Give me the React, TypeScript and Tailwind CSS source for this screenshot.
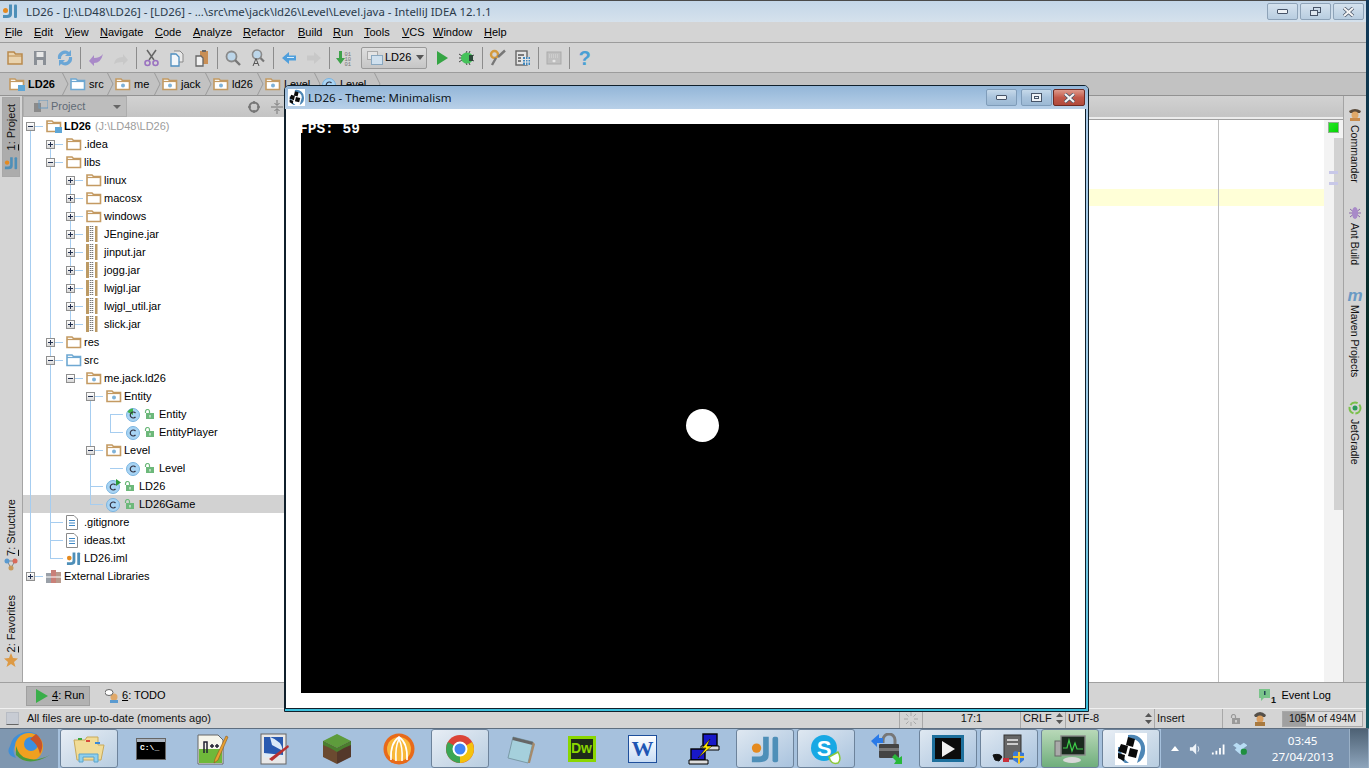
import type { ReactNode } from 'react';

const FONT = "font-['Liberation_Sans',Arial,sans-serif]";

// ---- small icons ----
function Folder({ tone = '#c49a62', dot, corner }: { tone?: string; dot?: boolean; corner?: boolean }) {
  return (
    <svg width="16" height="14" viewBox="0 0 16 14" className="shrink-0">
      <path d="M1 12.500V2h5l1.500 1.500H14.500V12.500Z" fill="#fff" stroke={tone} strokeWidth="1.600" />
      <path d="M1 4.500H14.500" stroke={tone} strokeWidth="1.200" />
      {dot && <circle cx="8" cy="8.500" r="2" fill="#7fb2d8" />}
      {corner && <rect x="9" y="8" width="7" height="6" fill="#5ea6d6" />}
    </svg>
  );
}

function Jar() {
  return (
    <svg width="12" height="16" viewBox="0 0 12 16">
      <rect x="0" y="0" width="3" height="16" fill="#bc9a64" />
      <rect x="9" y="0" width="2.500" height="16" fill="#bc9a64" />
      <path d="M4.500 0V16M6.500 0V16" stroke="#777" strokeWidth="1.500" strokeDasharray="1 1" />
    </svg>
  );
}

function ClassIcon({ arc, run }: { arc?: boolean; run?: boolean }) {
  return (
    <svg width="15" height="15" viewBox="0 0 15 15">
      <circle cx="7" cy="8" r="6.500" fill="#a8d4f4" stroke="#7ab4e0" />
      {arc && <path d="M7 8V1.500A6.500 6.500 0 0 0 1.500 5Z" fill="#3fb24a" />}
      <path d="M9.500 6A3 3 0 1 0 9.500 10" fill="none" stroke="#334" strokeWidth="1.200" />
      {run && <path d="M10 0L15 3.500L10 7Z" fill="#2a9a3a" />}
    </svg>
  );
}

function OpenLock({ tone = '#6cb87a' }: { tone?: string }) {
  return (
    <svg width="10" height="10" viewBox="0 0 10 10">
      <path d="M1.500 4V2.500a2 2 0 0 1 4 0V4" fill="none" stroke={tone} strokeWidth="1.200" />
      <rect x="2" y="4" width="8" height="6" fill={tone} />
      <rect x="5.500" y="6" width="1" height="2.500" fill="#fff" />
    </svg>
  );
}

function TextFile({ iml }: { iml?: boolean }) {
  if (iml) return <JiMark size={15} />;
  return (
    <svg width="12" height="15" viewBox="0 0 12 15">
      <path d="M.5.500H8L11.500 4V14.500H.5Z" fill="#fff" stroke="#8a8a8a" />
      <path d="M3 5.500H9M3 8H9M3 10.500H9" stroke="#3f87c4" />
    </svg>
  );
}

function JiMark({ size }: { size: number }) {
  return (
    <svg width={size} height={size} viewBox="0 0 16 16">
      <path d="M7 1.500H10V11Q10 15 5 15H1V12H5Q7 12 7 10Z" fill="#4e8fb8" />
      <rect x="12" y="1.500" width="3" height="13.500" rx="1" fill="#4e8fb8" />
      <circle cx="3.500" cy="7.500" r="2.500" fill="#e58a1f" />
    </svg>
  );
}

function GameLogo({ size }: { size: number }) {
  return (
    <svg width={size} height={size} viewBox="0 0 32 32">
      <rect width="32" height="32" fill="#fff" />
      <path d="M13 2A14 14 0 0 1 30 16A14 14 0 0 1 22 30L26 16Q26 6 13 5Z" fill="#4d86b5" />
      <path d="M3 14Q2 24 10 30L14 30Q5 24 6 14Z" fill="#4d86b5" />
      <path d="M13 4l7 2l-2 8l-7-2ZM6 11l7 2l-2 8l-8-3ZM15 15l8 2l-2 8l-8-2ZM3 20l7 2l-1 6l-6-3Z" fill="#0a0a0a" />
    </svg>
  );
}

function Expander({ open }: { open?: boolean }) {
  return (
    <span className="relative z-10 flex h-[9px] w-[9px] shrink-0 items-center justify-center border border-[#8f8f8f] bg-linear-to-b from-white to-[#d8d8d8]">
      <span className="absolute h-px w-[5px] bg-[#23304f]" />
      {!open && <span className="absolute h-[5px] w-px bg-[#23304f]" />}
    </span>
  );
}

function Vert({ children, flip, className = '' }: { children: ReactNode; flip?: boolean; className?: string }) {
  return (
    <span className={`whitespace-nowrap leading-[18px] text-[#111] [writing-mode:vertical-rl] ${flip ? 'rotate-180 text-[11px]' : 'text-[10.500px]'} ${className}`}>
      {children}
    </span>
  );
}

function Key({ children }: { children: ReactNode }) {
  return <span className="underline underline-offset-1">{children}</span>;
}

// ---- tree ----
type Row = {
  label: string;
  level: number;
  icon: ReactNode;
  exp?: 'open' | 'closed';
  lock?: boolean;
  note?: string;
  bold?: boolean;
  selected?: boolean;
};

const F = <Folder />;
const P = <Folder dot />;
const J = <Jar />;
const C = <ClassIcon />;

const rows: Row[] = [
  { label: 'LD26', level: 0, icon: <Folder corner />, exp: 'open', bold: true, note: '(J:\\LD48\\LD26)' },
  { label: '.idea', level: 1, icon: F, exp: 'closed' },
  { label: 'libs', level: 1, icon: F, exp: 'open' },
  { label: 'linux', level: 2, icon: F, exp: 'closed' },
  { label: 'macosx', level: 2, icon: F, exp: 'closed' },
  { label: 'windows', level: 2, icon: F, exp: 'closed' },
  { label: 'JEngine.jar', level: 2, icon: J, exp: 'closed' },
  { label: 'jinput.jar', level: 2, icon: J, exp: 'closed' },
  { label: 'jogg.jar', level: 2, icon: J, exp: 'closed' },
  { label: 'lwjgl.jar', level: 2, icon: J, exp: 'closed' },
  { label: 'lwjgl_util.jar', level: 2, icon: J, exp: 'closed' },
  { label: 'slick.jar', level: 2, icon: J, exp: 'closed' },
  { label: 'res', level: 1, icon: F, exp: 'closed' },
  { label: 'src', level: 1, icon: <Folder tone="#6ea8d2" />, exp: 'open' },
  { label: 'me.jack.ld26', level: 2, icon: P, exp: 'open' },
  { label: 'Entity', level: 3, icon: P, exp: 'open' },
  { label: 'Entity', level: 4, icon: <ClassIcon arc />, lock: true },
  { label: 'EntityPlayer', level: 4, icon: C, lock: true },
  { label: 'Level', level: 3, icon: P, exp: 'open' },
  { label: 'Level', level: 4, icon: C, lock: true },
  { label: 'LD26', level: 3, icon: <ClassIcon run />, lock: true },
  { label: 'LD26Game', level: 3, icon: C, lock: true, selected: true },
  { label: '.gitignore', level: 1, icon: <TextFile /> },
  { label: 'ideas.txt', level: 1, icon: <TextFile /> },
  { label: 'LD26.iml', level: 1, icon: <TextFile iml /> },
  {
    label: 'External Libraries',
    level: 0,
    exp: 'closed',
    icon: (
      <svg width="16" height="14" viewBox="0 0 16 14">
        <rect x="0" y="4" width="5" height="10" fill="#9aa0a8" />
        <rect x="5" y="1" width="5" height="13" fill="#c98078" />
        <rect x="10" y="3" width="5" height="11" fill="#b89a8c" />
        <path d="M0 8H15" stroke="#fff" />
      </svg>
    ),
  },
];

function TreeGuides() {
  // coordinates are relative to the tree panel
  const y = (i: number) => 9 + i * 18;
  const vs: [number, number, number][] = [
    [7, 0, 25],
    [27, 1, 24],
    [47, 3, 11],
    [47, 14, 14],
    [67, 15, 21],
    [87, 16, 17],
    [87, 19, 19],
  ];
  return (
    <svg className="pointer-events-none absolute left-0 top-0 z-[5]" width="200" height="480">
      {vs.map(([x, a, b]) => (
        <line key={`${x}-${a}`} x1={x + 0.5} x2={x + 0.5} y1={y(a)} y2={y(b) + 0.5} stroke="#a6cdf0" />
      ))}
      {rows.map((r, i) => {
        const x = 7 + r.level * 20;
        return <line key={i} x1={x} x2={x + 13} y1={y(i) + 0.5} y2={y(i) + 0.5} stroke="#a6cdf0" />;
      })}
    </svg>
  );
}

function TreeRow({ row }: { row: Row }) {
  return (
    <div
      className={`flex h-[18px] items-center text-[11px] text-black ${row.selected ? 'bg-[#d2d2d2]' : ''}`}
      style={{ paddingLeft: 3 + row.level * 20 }}
    >
      <span className="flex w-[20px] shrink-0 items-center">
        {row.exp && <Expander open={row.exp === 'open'} />}
      </span>
      <span className="relative z-10 flex w-[18px] shrink-0 items-center">{row.icon}</span>
      {row.lock && (
        <span className="relative z-10 flex w-[15px] shrink-0 items-center">
          <OpenLock />
        </span>
      )}
      <span className={`whitespace-nowrap ${row.bold ? 'font-bold' : ''}`}>{row.label}</span>
      {row.note && <span className="ml-[4px] whitespace-nowrap text-[#9c9c9c]">{row.note}</span>}
    </div>
  );
}

// ---- toolbar ----
function Tool({ children }: { children: ReactNode }) {
  return <span className="flex h-full w-[25px] shrink-0 items-center justify-center">{children}</span>;
}

function Sep() {
  return (
    <span className="flex h-full w-[6px] shrink-0 items-center justify-center">
      <span className="h-[22px] w-px bg-[#8c8c8c]" />
    </span>
  );
}

const Glyph = ({ children }: { children: ReactNode }) => (
  <svg width="18" height="18" viewBox="0 0 18 18">
    {children}
  </svg>
);

function Toolbar() {
  return (
    <div className="flex h-[30px] shrink-0 items-center border-b border-[#9c9c9c] pl-[2px]">
      <Tool>
        <Glyph>
          <path d="M2 15V3h6l1.500 2H16V15Z" fill="#e9d3ae" stroke="#b98a4d" strokeWidth="1.500" />
          <path d="M2 7H16" stroke="#b98a4d" />
        </Glyph>
      </Tool>
      <Tool>
        <Glyph>
          <path d="M3 2H15V16H3Z" fill="#8a8f96" />
          <rect x="5.500" y="3" width="7" height="5" fill="#e8e8e8" />
          <rect x="6" y="11" width="6" height="5" fill="#d8d8d8" />
        </Glyph>
      </Tool>
      <Tool>
        <Glyph>
          <path d="M2 10A7 7 0 0 1 13 3L15 1V7H9L11 5A4.500 4.500 0 0 0 5 10Z" fill="#6aa6d6" />
          <path d="M16 8A7 7 0 0 1 5 15L3 17V11H9L7 13A4.500 4.500 0 0 0 13 8Z" fill="#6aa6d6" />
        </Glyph>
      </Tool>
      <Sep />
      <Tool>
        <Glyph>
          <path d="M2 12L7 17V14Q14 14 16 5Q13 9 7 9V6Z" fill="#a98ac8" />
        </Glyph>
      </Tool>
      <Tool>
        <Glyph>
          <path d="M16 11L11 16V13Q5 13 2 15Q3 8 11 8V5Z" fill="#c8c8c8" />
        </Glyph>
      </Tool>
      <Sep />
      <Tool>
        <Glyph>
          <path d="M4 1L11 11M13 1L6 11" stroke="#666" strokeWidth="1.500" />
          <circle cx="4.500" cy="14" r="2.500" fill="none" stroke="#9a72c0" strokeWidth="1.600" />
          <circle cx="12.500" cy="14" r="2.500" fill="none" stroke="#9a72c0" strokeWidth="1.600" />
        </Glyph>
      </Tool>
      <Tool>
        <Glyph>
          <path d="M6 2H12L15 5V13H11" fill="#e8e8e8" stroke="#888" />
          <path d="M3 5H8L11 8V17H3Z" fill="#f2f6fa" stroke="#4f8fc0" strokeWidth="1.300" />
        </Glyph>
      </Tool>
      <Tool>
        <Glyph>
          <rect x="7" y="2" width="8" height="13" fill="#c98f55" />
          <rect x="9" y="1" width="4" height="2" fill="#666" />
          <path d="M3 7H8L10 9V17H3Z" fill="#f2f2f2" stroke="#666" strokeWidth="1.300" />
        </Glyph>
      </Tool>
      <Sep />
      <Tool>
        <Glyph>
          <circle cx="7.500" cy="7.500" r="5" fill="#bcd6ea" stroke="#8a8a8a" strokeWidth="1.800" />
          <path d="M11 11L16 16" stroke="#777" strokeWidth="2.400" />
        </Glyph>
      </Tool>
      <Tool>
        <Glyph>
          <circle cx="8" cy="5.500" r="4.500" fill="#bcd6ea" stroke="#8a8a8a" strokeWidth="1.600" />
          <path d="M11.500 9L15 12.500" stroke="#777" strokeWidth="2.200" />
          <path d="M4 17L7 9.500L10 17M5 14.500H9" fill="none" stroke="#555" />
        </Glyph>
      </Tool>
      <Sep />
      <Tool>
        <Glyph>
          <path d="M2 9L9 3V6.500H16V11.500H9V15Z" fill="#4f9fdc" />
          <path d="M7 8.500H14" stroke="#d6ecfb" />
        </Glyph>
      </Tool>
      <Tool>
        <Glyph>
          <path d="M16 9L9 3V6.500H2V11.500H9V15Z" fill="#c8c8c8" />
        </Glyph>
      </Tool>
      <Sep />
      <Tool>
        <Glyph>
          <path d="M3 2H6V9H9L4.500 15L0 9H3Z" fill="#3fa24a" />
          <text x="8.500" y="6.500" fontSize="5.500" fill="#777" fontFamily="Liberation Mono">01</text>
          <text x="8.500" y="11.500" fontSize="5.500" fill="#777" fontFamily="Liberation Mono">10</text>
          <text x="8.500" y="16.500" fontSize="5.500" fill="#777" fontFamily="Liberation Mono">01</text>
        </Glyph>
      </Tool>
      <div className="ml-[4px] flex h-[22px] w-[66px] shrink-0 items-center rounded-[2px] border border-[#9a9a9a] bg-linear-to-b from-[#dedede] to-[#c6c6c6] pl-[5px] text-[11px] text-black">
        <svg width="16" height="14" viewBox="0 0 16 14" className="mr-[2px]">
          <rect x=".5" y=".5" width="10" height="8" fill="#e4e4e4" stroke="#aaa" />
          <rect x="4.500" y="4.500" width="11" height="9" fill="#cfe0ee" stroke="#8aa8c0" />
        </svg>
        LD26
        <span className="ml-[5px] h-0 w-0 border-x-[4px] border-t-[5px] border-x-transparent border-t-[#555]" />
      </div>
      <span className="w-[2px] shrink-0" />
      <Tool>
        <Glyph>
          <path d="M4 2L15 9L4 16Z" fill="#35a544" />
        </Glyph>
      </Tool>
      <Tool>
        <Glyph>
          <path d="M1 5L4 7M1 13L4 11M1 9H4M9 2L8 4M12 2L11 4M9 16L8 14M12 16L11 14M16 6L14 7M16 12L14 11" stroke="#444" />
          <ellipse cx="9" cy="9" rx="6" ry="5.500" fill="#45c25a" />
          <rect x="11" y="6" width="4" height="6" fill="#2c4a3a" />
        </Glyph>
      </Tool>
      <Sep />
      <Tool>
        <Glyph>
          <circle cx="5.500" cy="5.500" r="3.500" fill="none" stroke="#d49a3c" strokeWidth="2.400" />
          <path d="M9 8L16 1.500M7 9L3 16" stroke="#777" strokeWidth="2.400" />
        </Glyph>
      </Tool>
      <Tool>
        <Glyph>
          <rect x="2" y="2" width="11" height="14" fill="#e4e4e4" stroke="#666" strokeWidth="1.400" />
          <path d="M4 6H10M4 9H7M4 12H7" stroke="#555" strokeWidth="1.400" />
          <rect x="9" y="8" width="7" height="8" fill="#3e86bd" />
          <path d="M11.500 8V16M14 8V16M9 10.500H16M9 13H16" stroke="#e4e4e4" />
        </Glyph>
      </Tool>
      <Sep />
      <Tool>
        <Glyph>
          <rect x="2" y="3" width="14" height="12" fill="#c0c0c0" stroke="#ababab" />
          <path d="M4 6H14M4 8H14" stroke="#dadada" strokeDasharray="1 1" />
          <path d="M7 12L9 10.500L11 12L9 13.500Z" fill="#e8e8e8" />
        </Glyph>
      </Tool>
      <Sep />
      <Tool>
        <span className="text-[20px] font-bold leading-none text-[#4a9fd4]">?</span>
      </Tool>
    </div>
  );
}

// ---- breadcrumb ----
const crumbs: { label: string; width: string; icon: ReactNode; bold?: boolean }[] = [
  { label: 'LD26', width: 'w-[61px]', icon: <Folder corner />, bold: true },
  { label: 'src', width: 'w-[45px]', icon: <Folder tone="#6ea8d2" /> },
  { label: 'me', width: 'w-[47px]', icon: <Folder dot /> },
  { label: 'jack', width: 'w-[51px]', icon: <Folder dot /> },
  { label: 'ld26', width: 'w-[52px]', icon: <Folder dot /> },
  { label: 'Level', width: 'w-[57px]', icon: <Folder dot /> },
  { label: 'Level', width: 'w-[60px]', icon: <ClassIcon /> },
];

function Breadcrumb() {
  return (
    <div className="flex h-[23px] shrink-0 items-center border-b border-[#929292] bg-[#c2c2c2] pl-[9px] text-[11px] text-black">
      {crumbs.map((c, i) => (
        <div key={i} className={`flex h-full shrink-0 items-center justify-between ${c.width}`}>
          <span className="flex items-center gap-[3px]">
            {c.icon}
            <span className={c.bold ? 'font-bold' : ''}>{c.label}</span>
          </span>
          <svg width="7" height="22" viewBox="0 0 7 22" className="mr-[1px]">
            <path d="M.5 0L6 11L.5 22" fill="none" stroke="#9a9a9a" />
          </svg>
        </div>
      ))}
    </div>
  );
}

// ---- window buttons ----
function GlassButton({ width, tone, children }: { width: string; tone?: 'close' | 'dim'; children: ReactNode }) {
  const look =
    tone === 'close'
      ? 'border-[#6e2a22] bg-linear-to-b from-[#dd9a8c] via-[#c2594a] to-[#b04a3c]'
      : tone === 'dim'
        ? 'border-[#8ea3b8] bg-linear-to-b from-[#d5e2ee] to-[#b8cde0]'
        : 'border-[#7f9cb9] bg-linear-to-b from-[#c6d9ea] via-[#a9c3dc] to-[#9cb9d4]';
  return (
    <span className={`flex h-[17px] shrink-0 items-center justify-center rounded-[2px] border ${look} ${width}`}>
      {children}
    </span>
  );
}

const CloseMark = () => (
  <svg width="13" height="10" viewBox="0 0 13 10">
    <path d="M2 1L11 9M11 1L2 9" stroke="#475468" strokeWidth="3.600" />
    <path d="M2 1L11 9M11 1L2 9" stroke="#f4f4f4" strokeWidth="2.200" />
  </svg>
);

// ---- game window ----
function GameWindow() {
  return (
    <div className="absolute left-[284px] top-[85px] z-20 flex h-[627px] w-[805px] flex-col overflow-hidden rounded-t-[5px] border border-[#10202c] bg-linear-to-b from-[#a8c8e6] via-[#9ccbe6] to-[#3cc0dc]">
      <div className="flex h-[23px] shrink-0 items-center justify-between bg-linear-to-b from-[#93b6d8] to-[#b8d0e8] pl-[3px] pr-[3px]">
        <div className="flex items-center gap-[3px] font-['Noto_Sans',sans-serif] text-[11.500px] text-[#0c1420]">
          <GameLogo size={17} />
          <span>LD26 - Theme: Minimalism</span>
        </div>
        <div className="flex items-center">
          <GlassButton width="w-[31px]">
            <span className="h-[5px] w-[11px] rounded-[1px] border border-[#475468] bg-[#eef2f6]" />
          </GlassButton>
          <span className="w-[4px]" />
          <GlassButton width="w-[31px]">
            <span className="flex h-[9px] w-[11px] items-center justify-center border border-[#475468] bg-[#eef2f6]">
              <span className="h-[3px] w-[5px] border border-[#475468]" />
            </span>
          </GlassButton>
          <span className="w-[1px]" />
          <GlassButton width="w-[32px]" tone="close">
            <CloseMark />
          </GlassButton>
        </div>
      </div>
      <div className="mr-[2px] mb-[2px] min-h-0 flex-1 border-x border-b border-[#10202c] bg-white p-[15px]">
        <div className="relative h-full w-full bg-black">
          <span className="absolute left-[-2px] top-[-3px] whitespace-pre font-['Liberation_Mono',monospace] text-[14.500px] font-bold leading-[16px] text-white">
            FPS: 59
          </span>
          <span className="absolute left-[385px] top-[285px] h-[33px] w-[33px] rounded-full bg-white" />
        </div>
      </div>
    </div>
  );
}

// ---- taskbar ----
function Task({ width, look, children }: { width: string; look?: 'on' | 'green' | 'light'; children: ReactNode }) {
  const skin =
    look === 'on'
      ? 'border border-[#6d839b] bg-linear-to-br from-[#dfe8f1] to-[#a9c3de]'
      : look === 'green'
        ? 'border border-[#6d839b] bg-linear-to-b from-[#b8d8b8] to-[#6fae7c]'
        : look === 'light'
          ? 'border border-[#6d839b] bg-linear-to-br from-[#e8eef5] to-[#b8cde0]'
          : '';
  return (
    <div className={`flex h-full shrink-0 items-center justify-center ${width}`}>
      <div className={`flex h-[39px] w-[58px] items-center justify-center rounded-[3px] ${skin}`}>{children}</div>
    </div>
  );
}

function Taskbar() {
  return (
    <div className="flex h-[40px] w-[1369px] shrink-0 items-center border-t border-[#5e6e80] bg-[#a6c1dd]">
      <div className="flex h-full w-[58px] shrink-0 items-center justify-center bg-[#7f97b0]">
        <svg width="46" height="34" viewBox="0 0 46 34">
          <path d="M4 14A18 18 0 0 1 34 5Q22 1 12 10Q4 17 10 26Q-1 23 4 14Z" fill="#3f8fd8" />
          <circle cx="23" cy="15" r="14" fill="#f0a020" />
          <circle cx="25" cy="12" r="7" fill="#3c8fe0" />
          <path d="M10 23Q22 36 44 23Q30 30 20 26Q13 24 10 14Z" fill="#4a9a3a" />
          <path d="M30 2Q40 10 34 22Q32 12 24 7Z" fill="#c8542a" />
        </svg>
      </div>
      <Task width="w-[62px]" look="light">
        <svg width="32" height="28" viewBox="0 0 32 28">
          <path d="M1 5H12L14 2H25V10H31L28 25H4Z" fill="#f1dc97" stroke="#c8a95a" />
          <rect x="5" y="3" width="4" height="2" fill="#3ea83e" />
          <rect x="13" y="5" width="4" height="2" fill="#d84a3a" />
          <rect x="22" y="7" width="5" height="2" fill="#3a8ad8" />
          <path d="M6 27V19H25V27H21V22H10V27Z" fill="#8fd0ee" stroke="#5aa4cc" />
        </svg>
      </Task>
      <Task width="w-[62px]">
        <div className="flex h-[22px] w-[30px] flex-col border border-[#666] bg-black">
          <span className="h-[3px] bg-[#aab4c0]" />
          <span className="whitespace-pre pl-[3px] font-['Liberation_Mono',monospace] text-[8px] font-bold leading-[11px] text-white">C:\_</span>
        </div>
      </Task>
      <Task width="w-[62px]">
        <svg width="32" height="32" viewBox="0 0 32 32">
          <path d="M1 2H21L26 7V31H1Z" fill="#f6f6ec" stroke="#666" />
          <rect x="2" y="16" width="23" height="14" fill="#6fb83a" />
          <path d="M7 20V9H10V20M13 13H17M15 11V15M18 13H22M20 11V15" fill="none" stroke="#223" strokeWidth="1.500" />
          <path d="M18 26L29 3L31 4L21 27L17 30Z" fill="#e8a030" stroke="#8a5a20" strokeWidth=".6" />
        </svg>
      </Task>
      <Task width="w-[62px]">
        <svg width="30" height="32" viewBox="0 0 30 32">
          <rect x="1" y="1" width="25" height="30" fill="#e8e8e8" stroke="#666" />
          <rect x="4" y="4" width="19" height="20" fill="#2a5ab0" />
          <path d="M10 4Q22 8 23 18L12 12ZM4 20L23 22V24H4Z" fill="#dceaf8" />
          <path d="M9 26L28 12L29 14L12 28Z" fill="#b83030" />
        </svg>
      </Task>
      <Task width="w-[62px]">
        <svg width="30" height="32" viewBox="0 0 30 32">
          <path d="M15 1L29 8L15 15L1 8Z" fill="#5e9c3c" />
          <path d="M1 8L15 15V31L1 24Z" fill="#6b4a30" />
          <path d="M29 8L15 15V31L29 24Z" fill="#54382a" />
          <path d="M1 8L15 15L29 8V12L22 15L15 19L8 15L1 12Z" fill="#4a7f2e" />
        </svg>
      </Task>
      <Task width="w-[62px]">
        <svg width="32" height="32" viewBox="0 0 32 32">
          <circle cx="16" cy="16" r="15.500" fill="#e86a1a" />
          <circle cx="16" cy="16" r="12" fill="#f8b83a" />
          <path d="M8 27Q7 10 16 4Q25 10 24 27M13 28Q12 14 16 6Q20 14 19 28" fill="none" stroke="#fff" strokeWidth="1.600" />
        </svg>
      </Task>
      <Task width="w-[60px]" look="light">
        <svg width="30" height="30" viewBox="0 0 30 30">
          <circle cx="15" cy="15" r="14" fill="#db4437" />
          <path d="M15 15L27.100 8A14 14 0 0 1 15 29Z" fill="#f4c20d" />
          <path d="M15 15L15 29A14 14 0 0 1 2.900 8Z" fill="#3aa655" />
          <circle cx="15" cy="15" r="6.500" fill="#4285f4" stroke="#fff" strokeWidth="2" />
        </svg>
      </Task>
      <Task width="w-[61px]">
        <svg width="30" height="30" viewBox="0 0 30 30">
          <path d="M7 3L27 8L22 29L2 24Z" fill="#a5d0dc" stroke="#7a9aa6" />
          <path d="M7 3L27 8L26.500 11L6.500 6Z" fill="#666" />
          <path d="M27 8L29 10L24 29H22Z" fill="#a68a6a" />
        </svg>
      </Task>
      <Task width="w-[61px]">
        <div className="flex h-[26px] w-[28px] items-center justify-center border-[3px] border-[#8ad600] bg-[#1e2a1a] text-[14px] font-bold text-[#8ad600]">
          Dw
        </div>
      </Task>
      <Task width="w-[61px]">
        <div className="relative flex h-[28px] w-[29px] items-center justify-center border border-[#1e4f9c] bg-linear-to-b from-white to-[#c8dcf4] font-['Liberation_Serif',serif] text-[22px] font-bold leading-none text-[#1e56b4]">
          W
        </div>
      </Task>
      <Task width="w-[61px]">
        <svg width="32" height="32" viewBox="0 0 32 32">
          <rect x="15" y="1" width="14" height="12" fill="#1818c8" stroke="#000" strokeWidth="1.400" />
          <path d="M13 13H31V17H13Z" fill="#ddd" stroke="#000" />
          <rect x="3" y="16" width="14" height="11" fill="#1818c8" stroke="#000" strokeWidth="1.400" />
          <path d="M1 27H20V31H1Z" fill="#ddd" stroke="#000" />
          <path d="M22 6L14 15H18L10 25L24 13H19Z" fill="#ffe800" stroke="#000" strokeWidth=".5" />
        </svg>
      </Task>
      <Task width="w-[61px]" look="on">
        <JiMark size={30} />
      </Task>
      <Task width="w-[61px]" look="on">
        <svg width="32" height="32" viewBox="0 0 32 32">
          <circle cx="14" cy="15" r="13" fill="#18a8e4" />
          <text x="14" y="23" fontSize="22" fontWeight="700" fill="#fff" textAnchor="middle" fontFamily="Liberation Sans">S</text>
          <path d="M19 24L28 19Q32 26 28 30Q21 32 19 24Z" fill="#fff" stroke="#8ac83a" strokeWidth="1.500" />
        </svg>
      </Task>
      <Task width="w-[61px]">
        <svg width="32" height="32" viewBox="0 0 32 32">
          <path d="M12 10V7a6 6 0 0 1 12 0V11" fill="none" stroke="#777" strokeWidth="3" />
          <rect x="8" y="11" width="20" height="14" rx="1" fill="#444" />
          <path d="M8 15H28V18H8Z" fill="#777" />
          <path d="M0 8L8 1V5H12V10H6V14Z" fill="#2a7ae8" />
          <path d="M31 31L23 31L25 28L21 24L24 21L28 25L31 23Z" fill="#28b83a" />
        </svg>
      </Task>
      <Task width="w-[61px]" look="on">
        <div className="relative flex h-[27px] w-[32px] items-center justify-center border-[3px] border-[#1d6f9c] bg-[#0c0c0c]">
          <svg width="14" height="16" viewBox="0 0 14 16">
            <path d="M1 0L14 8L1 16Z" fill="#f0f0f0" />
          </svg>
        </div>
      </Task>
      <Task width="w-[61px]" look="on">
        <svg width="34" height="32" viewBox="0 0 34 32">
          <rect x="12" y="2" width="17" height="24" fill="#666" stroke="#333" />
          <path d="M15 7H26M15 11H26" stroke="#ccc" strokeWidth="2" />
          <path d="M1 22Q8 20 10 24L7 28L3 27Z" fill="#111" stroke="#111" />
          <rect x="11" y="25" width="6" height="4" fill="#c8303a" />
          <path d="M23 18L32 20V27L27 31L21 27V20Z" fill="#3a7ad8" />
          <path d="M27 19V31M21 24H32" stroke="#f0c830" strokeWidth="2" />
        </svg>
      </Task>
      <Task width="w-[61px]" look="green">
        <svg width="32" height="30" viewBox="0 0 32 30">
          <rect x="1" y="7" width="6" height="15" fill="#aaa" stroke="#666" />
          <rect x="7" y="2" width="24" height="19" fill="#1a2a1e" stroke="#888" strokeWidth="1.400" />
          <path d="M9 14H13L15 6L18 17L21 9L23 15H29" fill="none" stroke="#3ecf4a" strokeWidth="1.200" />
          <ellipse cx="18" cy="26" rx="9" ry="3" fill="#d8d8d8" />
        </svg>
      </Task>
      <Task width="w-[61px]" look="light">
        <GameLogo size={32} />
      </Task>
      <div className="flex h-full min-w-0 flex-1 items-center bg-[#7a93af] pl-[10px] text-white">
        <span className="h-0 w-0 border-x-[4px] border-b-[5px] border-x-transparent border-b-white" />
        <svg width="14" height="14" viewBox="0 0 14 14" className="ml-[10px]">
          <path d="M1 5H4L8 1V13L4 9H1Z" fill="#eef3f8" />
          <path d="M10 4Q12 7 10 10" fill="none" stroke="#eef3f8" />
        </svg>
        <svg width="16" height="12" viewBox="0 0 16 12" className="ml-[9px]">
          <path d="M1 10h2v2H1ZM5 8h2v4H5ZM9 5h2v7H9ZM13 1h2v11h-2Z" fill="#fff" />
        </svg>
        <svg width="16" height="15" viewBox="0 0 16 15" className="ml-[8px]">
          <path d="M4 1L8 4L4 7L0 4ZM12 1L16 4L12 7L8 4ZM4 7L8 10L12 7L8 4ZM8 10L12 7L14 9L8 14L2 9L4 7Z" fill="#b8dcf4" />
          <circle cx="12" cy="11" r="3.500" fill="#1f8f3f" />
        </svg>
        <div className="ml-[23px] flex w-[72px] flex-col items-center font-['Noto_Sans',sans-serif] text-[11.600px] leading-[16px]">
          <span>03:45</span>
          <span className="whitespace-nowrap">27/04/2013</span>
        </div>
        <div className="ml-[14px] h-full w-[22px] border-x border-[#9ab0c6] bg-linear-to-b from-[#4e6275] to-[#8ea5bc]" />
      </div>
    </div>
  );
}

// ---- page ----
const menu = ['File', 'Edit', 'View', 'Navigate', 'Code', 'Analyze', 'Refactor', 'Build', 'Run', 'Tools', 'VCS', 'Window', 'Help'];
const menuWidths = ['w-[29px]', 'w-[31px]', 'w-[35px]', 'w-[55px]', 'w-[38px]', 'w-[50px]', 'w-[55px]', 'w-[35px]', 'w-[31px]', 'w-[38px]', 'w-[31px]', 'w-[51px]', 'w-[40px]'];

export default function App() {
  return (
    <div className={`relative flex h-[768px] w-[1369px] flex-col overflow-hidden bg-[#0b2a33] ${FONT}`}>
      <div className="flex min-h-0 flex-1">
        <div className="flex w-[1366px] shrink-0 flex-col bg-[#d4d4d4]">
          {/* title bar */}
          <div className="flex h-[22px] shrink-0 items-center justify-between border-t border-[#4a4a4a] bg-linear-to-b from-[#c3d6e8] to-[#d5e1ec] pl-[2px] pr-[2px] font-['Noto_Sans',sans-serif] text-[11.400px] text-[#2a3a4a]">
            <div className="flex items-center gap-[8px]">
              <JiMark size={16} />
              <span>LD26 - [J:\LD48\LD26] - [LD26] - ...\src\me\jack\ld26\Level\Level.java - IntelliJ IDEA 12.1.1</span>
            </div>
            <div className="flex items-center gap-[2px]">
              <GlassButton width="w-[31px]" tone="dim">
                <span className="h-[5px] w-[11px] rounded-[1px] border border-[#475468] bg-[#eef2f6]" />
              </GlassButton>
              <GlassButton width="w-[31px]" tone="dim">
                <span className="relative h-[9px] w-[11px]">
                  <span className="absolute right-0 top-0 h-[6px] w-[8px] border border-[#475468]" />
                  <span className="absolute bottom-0 left-0 h-[6px] w-[8px] border border-[#475468] bg-[#dfe8f1]" />
                </span>
              </GlassButton>
              <GlassButton width="w-[31px]" tone="dim">
                <CloseMark />
              </GlassButton>
            </div>
          </div>
          {/* menu */}
          <div className="flex h-[21px] shrink-0 items-center border-b border-[#9c9c9c] pl-[5px] text-[11px] text-black">
            {menu.map((m, i) => (
              <span key={m} className={`shrink-0 ${menuWidths[i]}`}>
                <Key>{m[0]}</Key>
                {m.slice(1)}
              </span>
            ))}
          </div>
          <Toolbar />
          <Breadcrumb />
          {/* middle */}
          <div className="flex min-h-0 flex-1">
            <div className="flex w-[23px] shrink-0 flex-col items-center justify-between border-r border-[#a4a4a4] pb-[15px] pt-px">
              <div className="flex h-[80px] w-[18px] flex-col items-center justify-between border border-[#a8a8a8] bg-[#acacac] pb-[6px] pt-[6px]">
                <Vert flip>
                  <Key>1</Key>: Project
                </Vert>
                <JiMark size={14} />
              </div>
              <div className="flex flex-col items-center">
                <Vert flip>
                  <Key>7</Key>: Structure
                </Vert>
                <svg width="14" height="14" viewBox="0 0 14 14" className="mt-[1px]">
                  <path d="M3 4L7 11L11 4H3" fill="none" stroke="#888" />
                  <circle cx="3" cy="4" r="2.500" fill="#5a9ad0" />
                  <circle cx="11" cy="4" r="2.500" fill="#d86a5a" />
                  <circle cx="7" cy="11" r="2.500" fill="#c89a5a" />
                </svg>
                <span className="mt-[24px] flex">
                  <Vert flip>
                    <Key>2</Key>: Favorites
                  </Vert>
                </span>
                <svg width="14" height="14" viewBox="0 0 14 14" className="mt-[1px]">
                  <path d="M7 0L9 5L14 5.500L10 9L11.500 14L7 11L2.500 14L4 9L0 5.500L5 5Z" fill="#dd9a45" />
                </svg>
              </div>
            </div>
            <div className="flex min-w-0 flex-1 flex-col">
              <div className="flex h-[21px] shrink-0 items-center bg-linear-to-b from-[#d2d2d2] to-[#c4c4c4]">
                <div className="flex h-full w-[104px] items-center border border-[#adadad] bg-[#bdbdbd] pl-[10px] text-[11px] text-[#5f6a75]">
                  <svg width="14" height="13" viewBox="0 0 14 13" className="mr-[3px]">
                    <rect x="0" y="3" width="7" height="9" fill="#8a8a8a" />
                    <rect x="5" y="0" width="9" height="8" fill="none" stroke="#6a9ac0" />
                  </svg>
                  Project
                  <span className="ml-auto mr-[5px] h-0 w-0 border-x-[4px] border-t-[4px] border-x-transparent border-t-[#666]" />
                </div>
                <div className="ml-[121px] flex items-center gap-[11px]">
                  <svg width="12" height="12" viewBox="0 0 12 12">
                    <circle cx="6" cy="6" r="4.500" fill="none" stroke="#777" strokeWidth="2" />
                    <path d="M6 0V3M6 9V12M0 6H3M9 6H12" stroke="#777" strokeWidth="1.500" />
                  </svg>
                  <svg width="12" height="14" viewBox="0 0 12 14">
                    <path d="M0 7H12M6 0V5M6 14V9M3.500 3L6 5.500L8.500 3M3.500 11L6 8.500L8.500 11" fill="none" stroke="#777" />
                  </svg>
                </div>
              </div>
              <div className="flex min-h-0 flex-1">
                <div className="relative w-[477px] shrink-0 bg-white">
                  <TreeGuides />
                  {rows.map((r, i) => (
                    <TreeRow key={i} row={r} />
                  ))}
                </div>
                <div className="flex min-w-0 flex-1 flex-col">
                  <div className="h-[3px] shrink-0 border-b border-[#a0a0a0] bg-[#ececec]" />
                  <div className="flex min-h-0 flex-1">
                    <div className="relative min-w-0 flex-1 bg-white pt-[69px]">
                      <div className="h-[17px] bg-[#ffffd7]" />
                      <span className="absolute bottom-0 left-[718px] top-0 w-px bg-[#c0c0c0]" />
                    </div>
                    <div className="relative w-[19px] shrink-0 bg-[#f3f3f3] pt-[2px]">
                      <span className="ml-[4px] block h-[11px] w-[11px] border border-[#8fb08f] bg-linear-to-br from-[#22e822] to-[#00d400]" />
                      <span className="ml-[10px] mt-[5px] block h-[372px] w-[9px] bg-[#d2d2d2]" />
                      <span className="absolute left-[5px] top-[51px] h-[3px] w-[9px] bg-[#c8c8e8]" />
                      <span className="absolute left-[5px] top-[62px] h-[3px] w-[9px] bg-[#c8c8e8]" />
                    </div>
                  </div>
                </div>
              </div>
            </div>
            <div className="flex w-[23px] shrink-0 flex-col items-center border-l border-[#a4a4a4] pt-[12px]">
              <svg width="14" height="13" viewBox="0 0 14 13" className="shrink-0">
                <path d="M1 3Q7 -1 13 3L12 5H2Z" fill="#5a4a3a" />
                <circle cx="7" cy="7" r="3.500" fill="#e0a868" />
                <rect x="2" y="10" width="10" height="3" fill="#c88a4a" />
              </svg>
              <Vert className="mt-[4px]">Commander</Vert>
              <svg width="14" height="14" viewBox="0 0 14 14" className="mt-[23px] shrink-0">
                <path d="M2 3L12 11M12 3L2 11M1 7H13" stroke="#8a6aa8" />
                <ellipse cx="7" cy="7" rx="3" ry="6" fill="#a88ac8" />
              </svg>
              <Vert className="mt-[3px]">Ant Build</Vert>
              <span className="mt-[24px] text-[17px] font-bold italic leading-[14px] text-[#6a9ac4]">m</span>
              <Vert className="mt-[2px]">Maven Projects</Vert>
              <svg width="14" height="14" viewBox="0 0 14 14" className="mt-[24px] shrink-0">
                <circle cx="7" cy="7" r="5.500" fill="none" stroke="#7ac04a" strokeWidth="2" strokeDasharray="8 2" />
                <circle cx="7" cy="7" r="2.500" fill="#2a9a5a" />
              </svg>
              <Vert className="mt-[4px]">JetGradle</Vert>
            </div>
          </div>
          {/* tool buttons */}
          <div className="flex h-[26px] shrink-0 items-center border-t border-[#a0a0a0] pl-[26px] pr-[35px] text-[11px] text-black">
            <div className="flex h-[20px] w-[64px] items-center border border-[#a0a0a0] bg-[#b2b2b2] pl-[9px]">
              <svg width="12" height="14" viewBox="0 0 12 14" className="mr-[4px]">
                <path d="M0 0L12 7L0 14Z" fill="#3aae4a" />
              </svg>
              <span>
                <Key>4</Key>: Run
              </span>
            </div>
            <div className="ml-[15px] flex items-center">
              <svg width="14" height="14" viewBox="0 0 14 14" className="mr-[3px]">
                <circle cx="9" cy="8" r="3.500" fill="#e0a868" />
                <rect x="5" y="11" width="8" height="3" fill="#5a9ad0" />
                <ellipse cx="4" cy="3.500" rx="4" ry="3" fill="#fff" stroke="#666" />
              </svg>
              <span>
                <Key>6</Key>: TODO
              </span>
            </div>
            <div className="ml-auto flex items-center">
              <svg width="19" height="16" viewBox="0 0 19 16" className="mr-[4px]">
                <path d="M1 1H12V10H6L3 13V10H1Z" fill="#7ac48a" />
                <rect x="6" y="3" width="1.500" height="4" fill="#245" />
                <text x="13" y="15" fontSize="9" fontWeight="700" fill="#111" fontFamily="Liberation Sans">1</text>
              </svg>
              <span>Event Log</span>
            </div>
          </div>
          {/* status bar */}
          <div className="flex h-[20px] shrink-0 items-center border-t border-[#f0f0f0] text-[11px] text-[#111]">
            <span className="ml-[6px] h-[13px] w-[13px] border border-[#b8bcc4] border-b-[#666] bg-[#c8ccd4]" />
            <span className="ml-[8px] w-[872px] whitespace-nowrap">All files are up-to-date (moments ago)</span>
            <span className="flex h-full w-[23px] items-center justify-center border-l border-[#a8a8a8]">
              <svg width="14" height="14" viewBox="0 0 14 14">
                <path d="M7 0V4M7 10V14M0 7H4M10 7H14M2 2L4.500 4.500M9.500 9.500L12 12M12 2L9.500 4.500M4.500 9.500L2 12" stroke="#a8a8a8" />
              </svg>
            </span>
            <span className="flex h-full w-[98px] items-center justify-center border-l border-[#a8a8a8]">17:1</span>
            <span className="flex h-full w-[45px] items-center justify-between border-l border-[#a8a8a8] px-[2px]">
              CRLF <Updown />
            </span>
            <span className="flex h-full w-[89px] items-center justify-between border-l border-[#a8a8a8] px-[2px]">
              UTF-8 <Updown />
            </span>
            <span className="flex h-full w-[68px] items-center border-l border-[#a8a8a8] pl-[2px]">Insert</span>
            <span className="flex h-full w-[56px] items-center border-l border-[#a8a8a8] pl-[7px]">
              <OpenLock tone="#9a9a9a" />
              <svg width="14" height="15" viewBox="0 0 14 15" className="ml-[13px]">
                <path d="M1 4Q7 -2 13 4L12 6H2Z" fill="#55504a" />
                <circle cx="7" cy="8" r="3.500" fill="#dca060" />
                <rect x="2" y="11" width="10" height="4" fill="#a87a40" />
              </svg>
            </span>
            <span className="ml-[4px] flex h-[16px] w-[81px] items-center justify-center whitespace-nowrap border border-[#a8a8a8] bg-linear-to-r from-[#a0a0a0] from-[29%] to-[#dcdcdc] to-[29%] text-[10.500px] text-[#111]">
              105M of 494M
            </span>
          </div>
        </div>
        <div className="w-[3px] shrink-0 bg-linear-to-b from-[#123a5c] via-[#06281e] to-[#0f5560]" />
      </div>
      <Taskbar />
      <GameWindow />
    </div>
  );
}

function Updown() {
  return (
    <svg width="7" height="11" viewBox="0 0 7 11">
      <path d="M3.500 0L7 4H0ZM3.500 11L0 7H7Z" fill="#555" />
    </svg>
  );
}
